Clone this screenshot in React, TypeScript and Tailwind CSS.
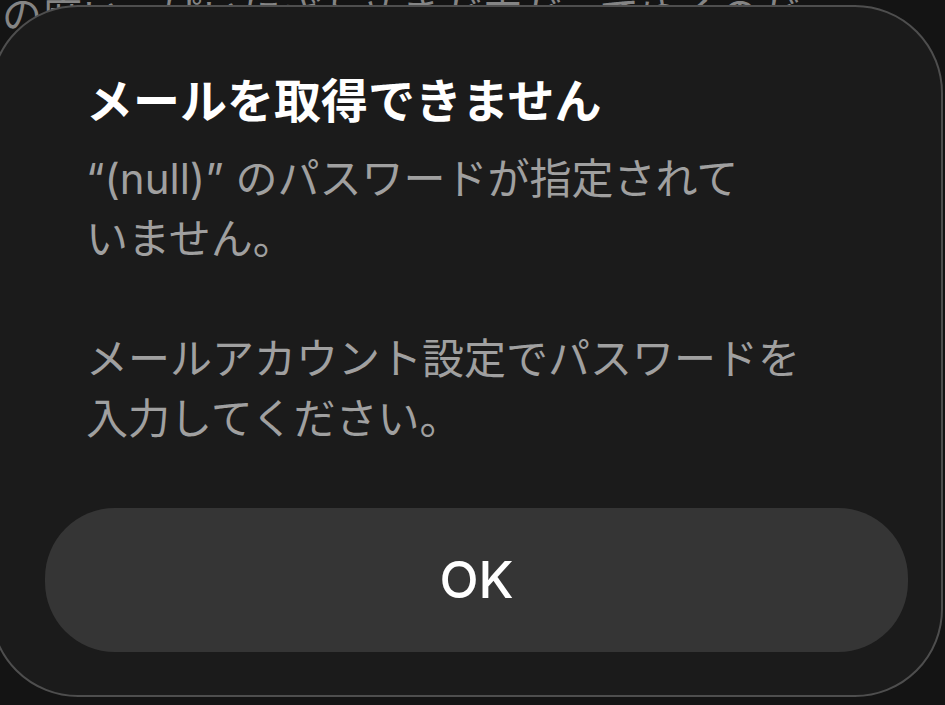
export default function App() {
  return (
    <div className="relative h-[705px] w-[945px] overflow-hidden bg-[#141414] font-['Inter','Noto_Sans_CJK_JP',sans-serif]">
      {/* page content behind the alert */}
      <div className="-mt-[14px] pl-[2px] font-['Liberation_Serif','Noto_Sans_CJK_JP',serif] text-[40px] leading-[62px] text-[#858585]">
        <p className="whitespace-nowrap">の席いっぱいにざわめきが広がってゆくのが</p>
        <p className="whitespace-nowrap">て、ひとりまたひとりと静かに立ち上がった。</p>
      </div>

      <div className="absolute left-[-10px] top-[5px] flex h-[692px] w-[953px] flex-col rounded-[88px] border-2 border-[#4e4e4e] bg-[#1b1b1b] pl-[53px] pt-[66px]">
        <div className="pl-[41px]">
          <h1 className="text-[47px] font-bold leading-[56px] text-white">
            メールを取得できません
          </h1>
          <div className="mt-[20px] text-[42px] leading-[60px] text-[#a0a0a0]">
            <p className="whitespace-nowrap">“(null)” のパスワードが指定されて</p>
            <p className="whitespace-nowrap">いません。</p>
            <p className="whitespace-nowrap">&nbsp;</p>
            <p className="whitespace-nowrap">メールアカウント設定でパスワードを</p>
            <p className="whitespace-nowrap">入力してください。</p>
          </div>
        </div>
        <button className="mt-[59px] flex h-[144px] w-[863px] items-center justify-center rounded-[70px] bg-[#353535] text-[51px] font-medium text-white">
          OK
        </button>
      </div>
    </div>
  );
}
